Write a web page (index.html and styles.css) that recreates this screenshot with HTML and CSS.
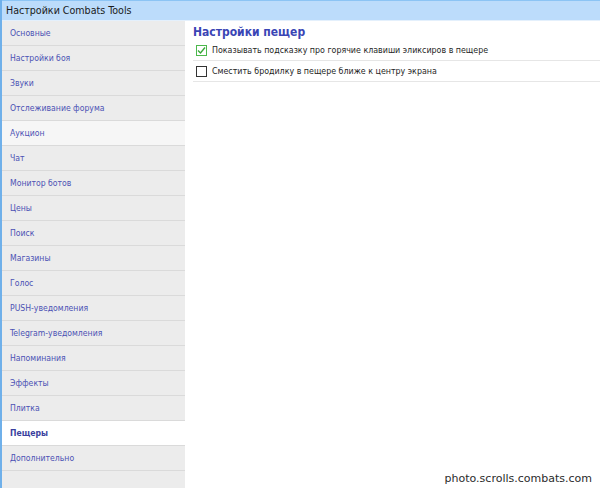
FILE: index.html
```html
<!DOCTYPE html>
<html lang="ru">
<head>
    <meta charset="UTF-8">
    <title>Настройки Combats Tools</title>
    <link rel="stylesheet" href="styles.css">
</head>
<body>

    <div class="window">
        <div class="titlebar">Настройки Combats Tools</div>

        <div class="main">
            <!-- Left menu -->
            <ul class="menu">
                <li>Основные</li>
                <li>Настройки боя</li>
                <li>Звуки</li>
                <li>Отслеживание форума</li>
                <li class="hover">Аукцион</li>
                <li>Чат</li>
                <li>Монитор ботов</li>
                <li>Цены</li>
                <li>Поиск</li>
                <li>Магазины</li>
                <li>Голос</li>
                <li>PUSH-уведомления</li>
                <li>Telegram-уведомления</li>
                <li>Напоминания</li>
                <li>Эффекты</li>
                <li>Плитка</li>
                <li class="active">Пещеры</li>
                <li>Дополнительно</li>
            </ul>

            <!-- Settings panel -->
            <div class="panel">
                <div class="panel-title">Настройки пещер</div>
                <label class="option">
                    <span class="check checked">
                        <svg width="9" height="9" viewBox="0 0 9 9"><path d="M1 4.5 L3.5 7 L8 1.5" fill="none" stroke="#3aa83a" stroke-width="1.4"/></svg>
                    </span>
                    Показывать подсказку про горячие клавиши эликсиров в пещере
                </label>
                <label class="option">
                    <span class="check"></span>
                    Сместить бродилку в пещере ближе к центру экрана
                </label>
            </div>
        </div>

        <div class="watermark">photo.scrolls.combats.com</div>
    </div>

</body>
</html>
```

FILE: styles.css
```css
/* Reset */
* {
    margin: 0;
    padding: 0;
    box-sizing: border-box;
}

body {
    font-family: 'DejaVu Sans', Verdana, sans-serif;
    background: #ffffff;
    color: #222;
    width: 600px;
    height: 488px;
    overflow: hidden;
}

.window {
    position: relative;
    height: 488px;
    border-left: 2px solid #6fb0ea;
    display: flex;
    flex-direction: column;
}

/* Title bar */
.titlebar {
    height: 21px;
    background: #bcdcfb;
    border-top: 1px solid #8cc4f4;
    border-bottom: 1px solid #e4f0fc;
    padding-left: 4px;
    font-family: 'DejaVu Sans Condensed', 'DejaVu Sans', sans-serif;
    font-size: 10.6px;
    line-height: 18px;
    color: #1a1a1a;
}

.main {
    flex: 1;
    display: flex;
}

/* Left menu */
.menu {
    list-style: none;
    width: 183px;
    background: #ececec;
}

.menu li {
    height: 25px;
    line-height: 24px;
    padding-left: 8px;
    border-bottom: 1px solid #dadada;
    font-family: 'DejaVu Sans Condensed', 'DejaVu Sans', sans-serif;
    font-size: 8.6px;
    color: #4b52b4;
}

.menu li.hover {
    background: #f6f6f6;
}

.menu li.active {
    background: #ffffff;
    font-weight: bold;
    color: #3a3f9e;
}

/* Settings panel */
.panel {
    flex: 1;
    padding: 3px 0 0 8px;
}

.panel-title {
    font-family: 'DejaVu Sans Condensed', 'DejaVu Sans', sans-serif;
    font-size: 12px;
    font-weight: bold;
    color: #3a45b5;
    height: 16px;
    line-height: 16px;
}

.option {
    display: flex;
    align-items: center;
    height: 21px;
    padding-left: 3px;
    border-bottom: 1px solid #e6e6e6;
    font-family: 'DejaVu Sans Condensed', 'DejaVu Sans', sans-serif;
    font-size: 8.8px;
    color: #1e1e1e;
}

.check {
    width: 11px;
    height: 11px;
    margin-right: 5px;
    border: 1px solid #333;
    background: #fff;
    display: flex;
    align-items: center;
    justify-content: center;
}

.check.checked {
    border-color: #4cb84c;
}

/* Watermark */
.watermark {
    position: absolute;
    right: 8px;
    bottom: 3px;
    font-family: 'DejaVu Sans', sans-serif;
    font-size: 11px;
    color: #2b2b2b;
}
```
